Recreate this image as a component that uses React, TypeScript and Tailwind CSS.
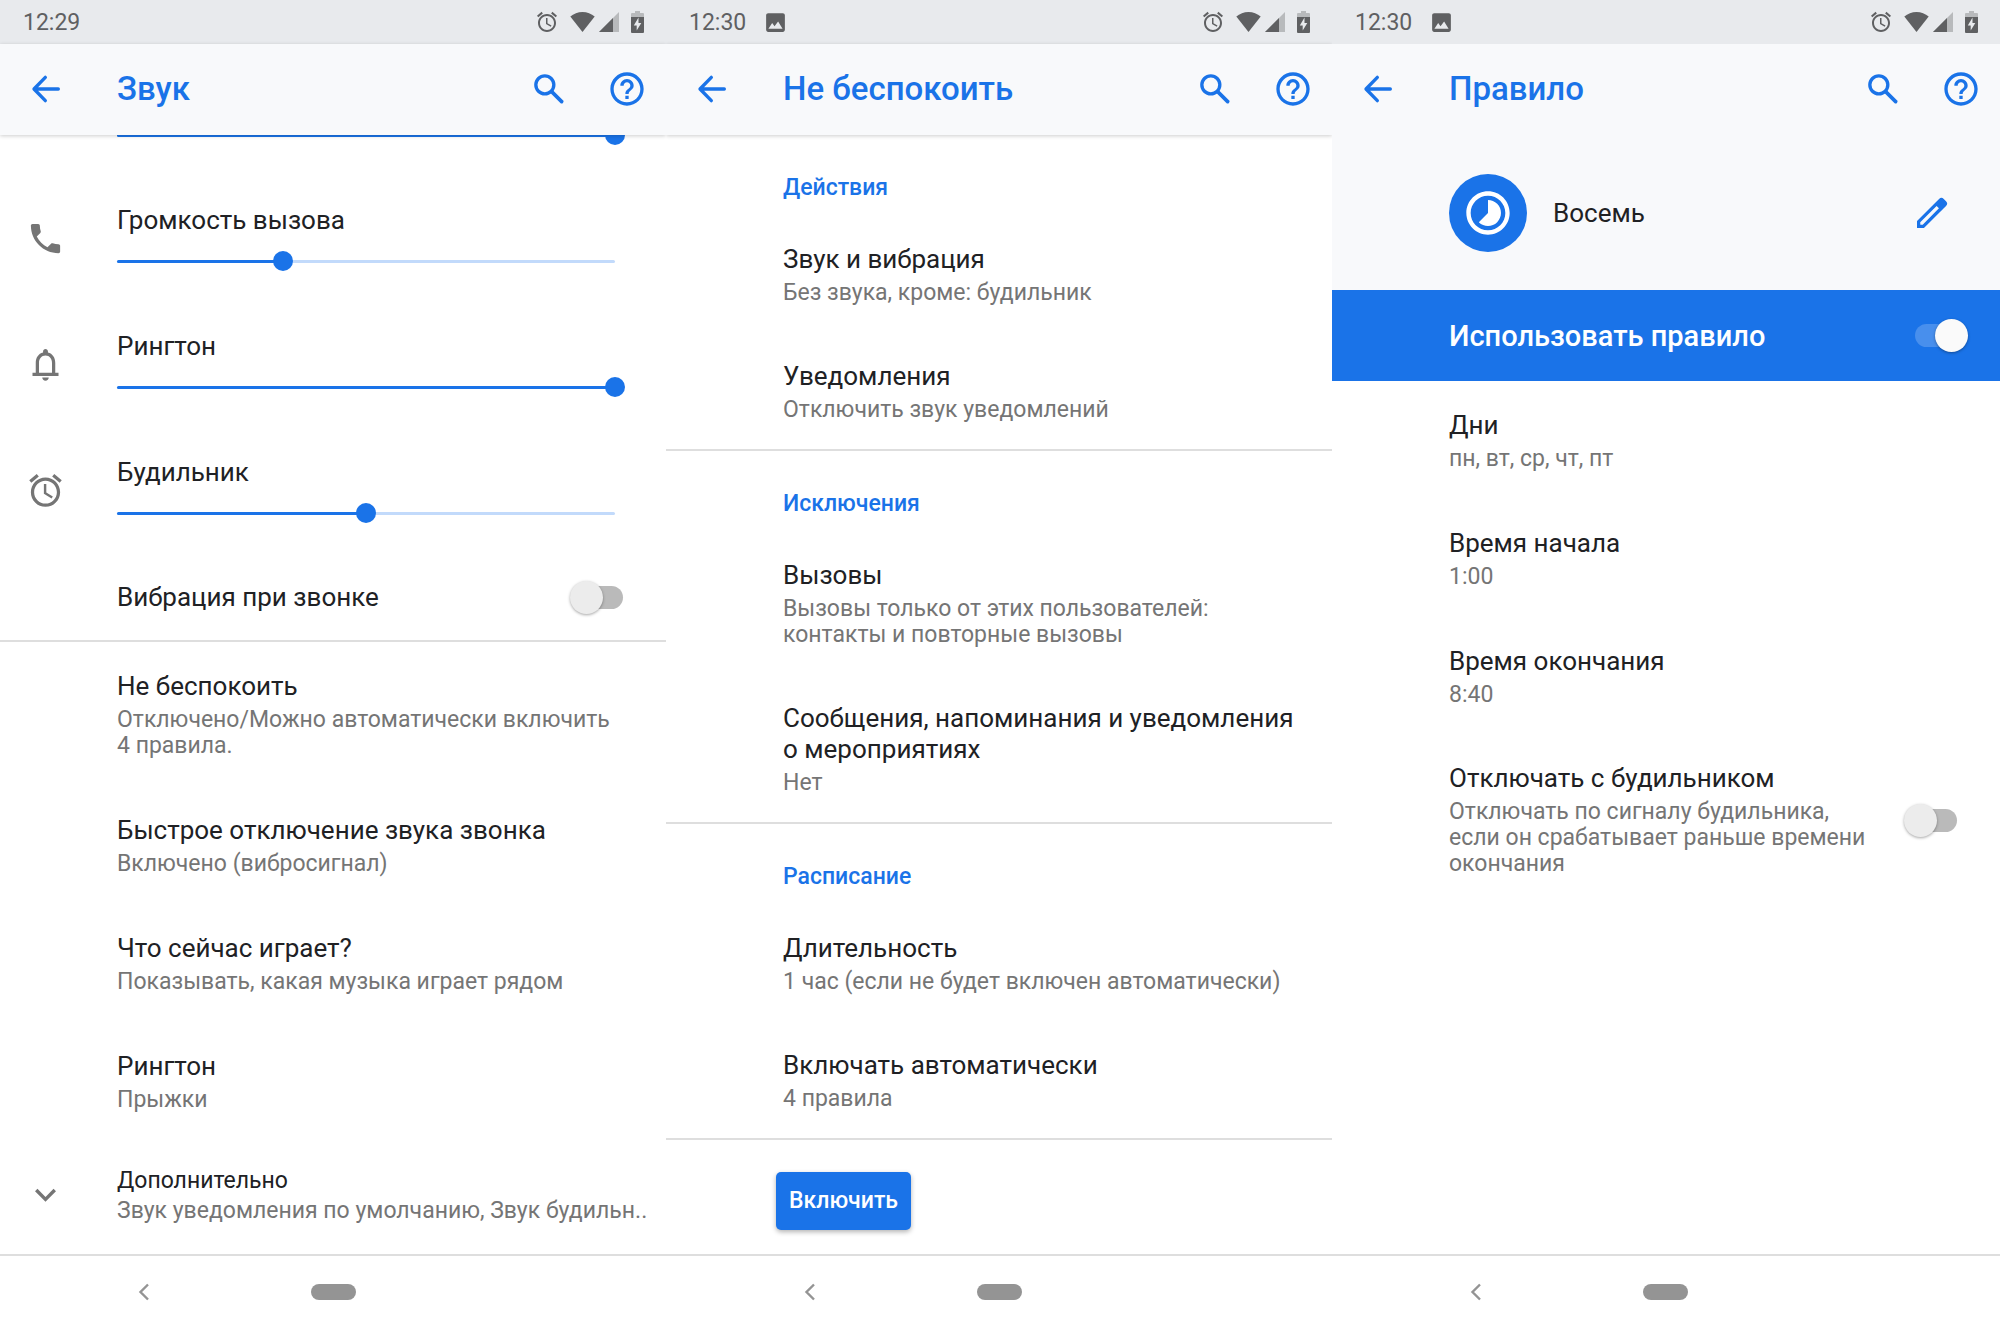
import React, { useState } from 'react';

type IconProps = { className?: string };

const ROBOTO = "font-['Roboto','Noto_Sans',sans-serif]";

function BackIcon({ className = '' }: IconProps) {
  return (
    <svg viewBox="0 0 24 24" fill="none" stroke="currentColor" strokeWidth="2" strokeLinecap="round" className={className}>
      <path d="M19.4 12H5.2M11.6 5 4.8 12l6.8 7" strokeLinejoin="round" />
    </svg>
  );
}

function SearchIcon({ className = '' }: IconProps) {
  return (
    <svg viewBox="0 0 24 24" fill="none" stroke="currentColor" strokeWidth="2" className={className}>
      <circle cx="9.5" cy="9.5" r="5.4" />
      <path d="m13.6 13.6 6 6" strokeWidth="2.2" strokeLinecap="round" />
    </svg>
  );
}

function HelpIcon({ className = '' }: IconProps) {
  return (
    <svg viewBox="0 0 24 24" fill="currentColor" className={className}>
      <path d="M11 18h2v-2h-2v2zm1-16C6.48 2 2 6.48 2 12s4.48 10 10 10 10-4.48 10-10S17.52 2 12 2zm0 18c-4.41 0-8-3.59-8-8s3.59-8 8-8 8 3.59 8 8-3.59 8-8 8zm0-14c-2.21 0-4 1.79-4 4h2c0-1.1.9-2 2-2s2 .9 2 2c0 2-3 1.75-3 5h2c0-2.25 3-2.5 3-5 0-2.21-1.79-4-4-4z" />
    </svg>
  );
}

function PhoneIcon({ className = '' }: IconProps) {
  return (
    <svg viewBox="0 0 24 24" fill="currentColor" className={className}>
      <path d="M6.62 10.79c1.44 2.83 3.76 5.14 6.59 6.59l2.2-2.2c.27-.27.67-.36 1.02-.24 1.12.37 2.33.57 3.57.57.55 0 1 .45 1 1V20c0 .55-.45 1-1 1-9.39 0-17-7.61-17-17 0-.55.45-1 1-1h3.5c.55 0 1 .45 1 1 0 1.25.2 2.45.57 3.57.11.35.03.74-.25 1.02l-2.2 2.2z" />
    </svg>
  );
}

function BellIcon({ className = '' }: IconProps) {
  return (
    <svg viewBox="0 0 24 24" fill="currentColor" className={className}>
      <path d="M12 22c1.1 0 2-.9 2-2h-4c0 1.1.9 2 2 2zM18 17v-6c0-3.07-1.63-5.64-4.5-6.32V4c0-.83-.67-1.5-1.5-1.5s-1.5.67-1.5 1.5v.68C7.64 5.36 6 7.92 6 11v6H4v2h16v-2h-2zm-2 0H8v-6c0-2.48 1.51-4.5 4-4.5s4 2.02 4 4.5v6z" />
    </svg>
  );
}

function AlarmIcon({ className = '' }: IconProps) {
  return (
    <svg viewBox="0 0 24 24" fill="currentColor" className={className}>
      <path d="m22 5.72-4.6-3.86-1.29 1.53 4.6 3.86L22 5.72zM7.88 3.39 6.6 1.86 2 5.71l1.29 1.53 4.59-3.85zM12.5 8H11v6l4.75 2.85.75-1.23-4-2.37V8zM12 4c-4.97 0-9 4.03-9 9s4.02 9 9 9c4.97 0 9-4.03 9-9s-4.03-9-9-9zm0 16c-3.87 0-7-3.13-7-7s3.13-7 7-7 7 3.13 7 7-3.13 7-7 7z" />
    </svg>
  );
}

function ChevronIcon({ className = '' }: IconProps) {
  return (
    <svg viewBox="0 0 24 24" fill="none" stroke="currentColor" strokeWidth="2.1" className={className}>
      <path d="M6.3 8 12 13.8 17.7 8" />
    </svg>
  );
}

function PencilIcon({ className = '' }: IconProps) {
  return (
    <svg viewBox="0 0 24 24" fill="currentColor" className={className}>
      <path d="M20.41 4.94 19.06 3.59a2 2 0 0 0-2.83 0L3 16.82V21h4.18L20.41 7.77a2 2 0 0 0 0-2.83zM6.41 19.06 5 19l-.06-1.41 9.81-9.82 1.42 1.42-9.76 9.87z" />
    </svg>
  );
}

function TimelapseIcon({ className = '' }: IconProps) {
  return (
    <svg viewBox="0 0 24 24" fill="currentColor" className={className}>
      <path d="M16.24 7.76C15.07 6.59 13.54 6 12 6v6l-4.24 4.24c2.34 2.34 6.14 2.34 8.49 0 2.34-2.34 2.34-6.14-.01-8.48zM12 2C6.48 2 2 6.48 2 12s4.48 10 10 10 10-4.48 10-10S17.52 2 12 2zm0 18c-4.42 0-8-3.58-8-8s3.58-8 8-8 8 3.58 8 8-3.58 8-8 8z" />
    </svg>
  );
}

function PictureIcon({ className = '' }: IconProps) {
  return (
    <svg viewBox="0 0 24 24" fill="currentColor" className={className}>
      <path d="M21 19V5c0-1.100-.9-2-2-2H5c-1.100 0-2 .9-2 2v14c0 1.100.9 2 2 2h14c1.100 0 2-.9 2-2zM8.800 12.500l2.300 3.200 3.400-4.700 4.300 7H5.200z" />
    </svg>
  );
}

function WifiIcon({ className = '' }: IconProps) {
  return (
    <svg viewBox="0 0 25 20" fill="currentColor" className={className}>
      <path d="M12.5 20 .3 4.6C3.6 1.7 7.9 0 12.5 0s8.9 1.7 12.2 4.6z" />
    </svg>
  );
}

function SignalIcon({ className = '' }: IconProps) {
  return (
    <svg viewBox="0 0 20 20" fill="currentColor" className={className}>
      <path d="M20 0v20H0z" fillOpacity="0.35" />
      <path d="M14 6v14H0z" />
    </svg>
  );
}

function BatteryIcon({ className = '' }: IconProps) {
  return (
    <svg viewBox="0 0 13 22" fill="currentColor" className={className}>
      <path d="M4 0h5v2h3a1 1 0 0 1 1 1v3H0V3a1 1 0 0 1 1-1h3z" fillOpacity="0.35" />
      <path fillRule="evenodd" d="M0 6h13v15a1 1 0 0 1-1 1H1a1 1 0 0 1-1-1zm7.5 0.5L2.8 14.500h2.900v5L10.300 12H7.500z" />
    </svg>
  );
}

function StatusBar({ time, picture = false }: { time: string; picture?: boolean }) {
  return (
    <div className="flex h-11 items-center bg-[#e8eaed] pr-[22px] pl-[23px] text-[#5f6062]">
      <span className="pt-0.5 text-[23px] leading-[26px]">{time}</span>
      {picture && <PictureIcon className="ml-[17px] size-[25px]" />}
      <div className="ml-auto flex items-center">
        <AlarmIcon className="size-6" />
        <WifiIcon className="ml-[11px] h-5 w-[25px]" />
        <SignalIcon className="ml-1 size-5" />
        <BatteryIcon className="ml-3 h-[22px] w-[13px]" />
      </div>
    </div>
  );
}

function Toolbar({ title, shadow = true }: { title: string; shadow?: boolean }) {
  return (
    <header
      className={`relative z-10 flex h-[91px] items-center bg-[#f8f9fb] pr-[19px] pb-0.5 text-[#1a73e8] ${
        shadow ? 'shadow-[0_1px_4px_rgba(0,0,0,0.2)]' : ''
      }`}
    >
      <div className="w-[117px] shrink-0 pl-[26px]">
        <button type="button" aria-label="Назад" className="block">
          <BackIcon className="size-10" />
        </button>
      </div>
      <h1 className="flex-1 text-[33px] leading-10 font-medium">{title}</h1>
      <div className="flex gap-[38px]">
        <button type="button" aria-label="Поиск">
          <SearchIcon className="size-10" />
        </button>
        <button type="button" aria-label="Справка">
          <HelpIcon className="size-10" />
        </button>
      </div>
    </header>
  );
}

function NavBar() {
  return (
    <nav className="grid h-[78px] shrink-0 grid-cols-3 items-center border-t-2 border-[#dedede] pb-1 text-[#949494]">
      <button type="button" aria-label="Назад" className="ml-[134px] w-5">
        <svg viewBox="0 0 20 20" fill="none" stroke="currentColor" strokeWidth="2.4" className="size-5">
          <path d="M14 2.5 6.500 10l7.500 7.500" />
        </svg>
      </button>
      <button type="button" aria-label="Домой" className="mx-auto h-4 w-[45px] rounded-full bg-[#949494]" />
    </nav>
  );
}

function Screen({ children }: { children: React.ReactNode }) {
  return <section className="flex min-h-screen min-w-0 flex-col overflow-hidden bg-white">{children}</section>;
}

const MAX_VOLUME = 30;

interface VolumeSliderProps {
  id?: string;
  label?: string;
  initial: number;
}

function VolumeSlider({ id, label, initial }: VolumeSliderProps) {
  const [value, setValue] = useState(initial);
  return (
    <div className="relative -mx-[10px] flex h-5 items-center">
      <div className="mx-[10px] h-[3px] flex-1 rounded-full bg-[#c2dafb]">
        <div className="h-full rounded-full bg-[#1a73e8]" style={{ width: `${(value / MAX_VOLUME) * 100}%` }} />
      </div>
      <input
        id={id}
        aria-label={label}
        type="range"
        min={0}
        max={MAX_VOLUME}
        value={value}
        onChange={(e) => setValue(Number(e.target.value))}
        className="absolute inset-0 h-5 w-full cursor-pointer appearance-none bg-transparent [&::-webkit-slider-thumb]:size-5 [&::-webkit-slider-thumb]:appearance-none [&::-webkit-slider-thumb]:rounded-full [&::-webkit-slider-thumb]:bg-[#1a73e8]"
      />
    </div>
  );
}

interface VolumeRowProps {
  id: string;
  icon: React.ReactNode;
  label: string;
  initial: number;
}

function VolumeRow({ id, icon, label, initial }: VolumeRowProps) {
  return (
    <div className="flex items-center pt-[60px] pr-[51px]">
      <div className="w-[117px] shrink-0 pl-[26px] text-[#757575]">{icon}</div>
      <div className="flex-1">
        <label htmlFor={id} className="mb-4 block text-[26px] leading-[30px] text-[#202124]">
          {label}
        </label>
        <VolumeSlider id={id} initial={initial} />
      </div>
    </div>
  );
}

function Switch({ id, initial = false }: { id: string; initial?: boolean }) {
  const [on, setOn] = useState(initial);
  return (
    <input
      id={id}
      type="checkbox"
      role="switch"
      checked={on}
      onChange={() => setOn(!on)}
      className="relative h-[23px] w-[50px] shrink-0 cursor-pointer appearance-none rounded-full bg-[#bababa] before:absolute before:-top-[5px] before:-left-[3px] before:size-[33px] before:rounded-full before:bg-[#ececec] before:shadow-[0_1px_3px_rgba(0,0,0,0.35)] checked:bg-[#488fed] checked:before:left-5 checked:before:bg-[#fafafa]"
    />
  );
}

function Preference({ title, summary }: { title: string; summary: string }) {
  return (
    <a href="#" className="block pt-[29px] pr-8 pb-[26px] pl-[117px]">
      <div className="text-[26px] leading-[31px] text-[#202124]">{title}</div>
      <div className="mt-[5px] text-[23px] leading-[26px] text-[#757575]">{summary}</div>
    </a>
  );
}

function Category({ title, children }: { title: string; children: React.ReactNode }) {
  return (
    <div className="border-b-2 border-[#dedede]">
      <h2 className="pt-10 pb-[14px] pl-[117px] text-[23px] leading-[26px] font-medium text-[#1a73e8]">{title}</h2>
      {children}
    </div>
  );
}

function SoundScreen() {
  return (
    <Screen>
      <StatusBar time="12:29" />
      <Toolbar title="Звук" />
      <main className="flex-1 overflow-hidden">
        {/* list is scrolled, the first slider is half under the toolbar */}
        <div className="-mt-[10px] pr-[51px] pl-[117px]">
          <VolumeSlider label="Громкость" initial={30} />
        </div>
        <VolumeRow id="call" icon={<PhoneIcon className="size-[39px]" />} label="Громкость вызова" initial={10} />
        <VolumeRow id="ring" icon={<BellIcon className="size-[39px]" />} label="Рингтон" initial={30} />
        <VolumeRow id="alarm" icon={<AlarmIcon className="size-[39px]" />} label="Будильник" initial={15} />
        <div className="flex items-center justify-between border-b-2 border-[#dedede] pt-[57px] pr-[43px] pb-[26px] pl-[117px]">
          <label htmlFor="vibrate" className="text-[26px] leading-[34px] text-[#202124]">
            Вибрация при звонке
          </label>
          <Switch id="vibrate" />
        </div>
        <div className="flex flex-col gap-px">
          <Preference title="Не беспокоить" summary={'Отключено/Можно автоматически включить 4\u00a0правила.'} />
          <Preference title="Быстрое отключение звука звонка" summary="Включено (вибросигнал)" />
          <Preference title="Что сейчас играет?" summary="Показывать, какая музыка играет рядом" />
          <Preference title="Рингтон" summary="Прыжки" />
          <button type="button" className="flex w-full items-center pt-[26px] text-left">
            <span className="w-[117px] shrink-0 pl-[26px] text-[#757575]">
              <ChevronIcon className="size-[39px]" />
            </span>
            <span className="min-w-0">
              <span className="block text-[23px] leading-[30px] text-[#202124]">Дополнительно</span>
              <span className="block text-[23px] leading-[30px] whitespace-nowrap text-[#757575]">
                Звук уведомления по умолчанию, Звук будильн..
              </span>
            </span>
          </button>
        </div>
      </main>
      <NavBar />
    </Screen>
  );
}

function DoNotDisturbScreen() {
  return (
    <Screen>
      <StatusBar time="12:30" picture />
      <Toolbar title="Не беспокоить" />
      <main className="flex-1">
        <Category title="Действия">
          <Preference title="Звук и вибрация" summary="Без звука, кроме: будильник" />
          <Preference title="Уведомления" summary="Отключить звук уведомлений" />
        </Category>
        <Category title="Исключения">
          <Preference title="Вызовы" summary="Вызовы только от этих пользователей: контакты и повторные вызовы" />
          <Preference title="Сообщения, напоминания и уведомления о мероприятиях" summary="Нет" />
        </Category>
        <Category title="Расписание">
          <Preference title="Длительность" summary="1 час (если не будет включен автоматически)" />
          <Preference title="Включать автоматически" summary="4 правила" />
        </Category>
        <button
          type="button"
          className="mt-8 ml-[110px] h-[58px] rounded-[5px] bg-[#1a73e8] px-[13px] text-[23px] leading-[26px] font-medium text-white shadow-[0_2px_5px_rgba(0,0,0,0.3)]"
        >
          Включить
        </button>
      </main>
      <NavBar />
    </Screen>
  );
}

function RuleScreen() {
  return (
    <Screen>
      <StatusBar time="12:30" picture />
      <Toolbar title="Правило" shadow={false} />
      <main className="flex-1">
        <div className="flex h-[155px] items-center bg-[#f8f9fb] pr-[48px] pl-[117px]">
          <span className="flex size-[78px] items-center justify-center rounded-full bg-[#1a73e8] text-white">
            <TimelapseIcon className="size-[52px]" />
          </span>
          <span className="ml-[26px] flex-1 pt-0.5 text-[26px] leading-[31px] text-[#202124]">Восемь</span>
          <button type="button" aria-label="Изменить" className="text-[#1a73e8]">
            <PencilIcon className="size-10" />
          </button>
        </div>
        <div className="flex h-[91px] items-center justify-between bg-[#1a73e8] pr-[35px] pl-[117px]">
          <label htmlFor="use-rule" className="text-[29px] leading-[34px] font-medium text-white">
            Использовать правило
          </label>
          <Switch id="use-rule" initial />
        </div>
        <div className="flex flex-col gap-px">
          <Preference title="Дни" summary="пн, вт, ср, чт, пт" />
          <Preference title="Время начала" summary="1:00" />
          <Preference title="Время окончания" summary="8:40" />
          <div className="flex items-center gap-10 pt-7 pr-[43px] pb-[26px] pl-[117px]">
            <label htmlFor="alarm-off" className="flex-1">
              <span className="block text-[26px] leading-[31px] text-[#202124]">Отключать с будильником</span>
              <span className="mt-[5px] block text-[23px] leading-[26px] text-[#757575]">
                Отключать по сигналу будильника, если он срабатывает раньше времени окончания
              </span>
            </label>
            <Switch id="alarm-off" />
          </div>
        </div>
      </main>
      <NavBar />
    </Screen>
  );
}

export default function App() {
  return (
    <div className={`grid min-h-screen grid-cols-[666fr_666fr_668fr] ${ROBOTO}`}>
      <SoundScreen />
      <DoNotDisturbScreen />
      <RuleScreen />
    </div>
  );
}
